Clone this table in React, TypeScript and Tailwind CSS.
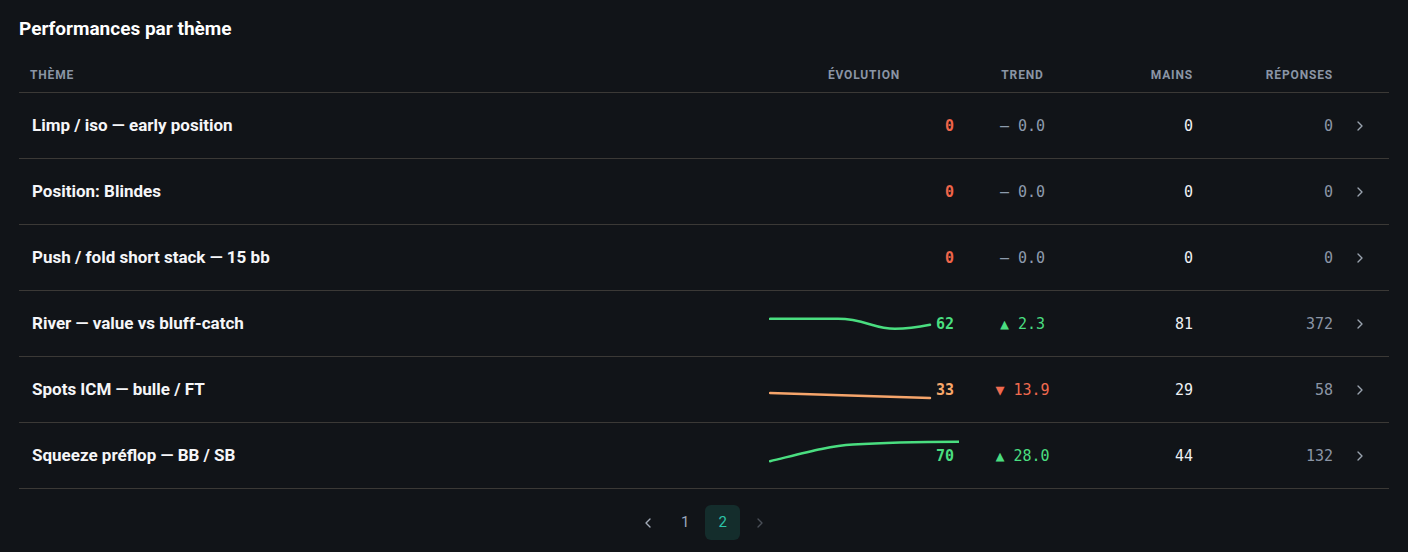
import { ChevronLeft, ChevronRight } from 'lucide-react';

type Row = {
  name: string;
  score: number;
  tone: 'red' | 'green' | 'orange';
  spark?: { d: string; color: string };
  trend: { dir: 'flat' | 'up' | 'down'; value: string };
  hands: number;
  answers: number;
};

const rows: Row[] = [
  { name: 'Limp / iso — early position', score: 0, tone: 'red', trend: { dir: 'flat', value: '0.0' }, hands: 0, answers: 0 },
  { name: 'Position: Blindes', score: 0, tone: 'red', trend: { dir: 'flat', value: '0.0' }, hands: 0, answers: 0 },
  { name: 'Push / fold short stack — 15 bb', score: 0, tone: 'red', trend: { dir: 'flat', value: '0.0' }, hands: 0, answers: 0 },
  {
    name: 'River — value vs bluff-catch',
    score: 62,
    tone: 'green',
    spark: { d: 'M1 12.8 L69 12.8 C95 12.8 105 22.8 126 22.8 C140 22.8 150 21 161 18.8', color: '#4ade80' },
    trend: { dir: 'up', value: '2.3' },
    hands: 81,
    answers: 372,
  },
  {
    name: 'Spots ICM — bulle / FT',
    score: 33,
    tone: 'orange',
    spark: { d: 'M1 21 L161 26', color: '#f6a56b' },
    trend: { dir: 'down', value: '13.9' },
    hands: 29,
    answers: 58,
  },
  {
    name: 'Squeeze préflop — BB / SB',
    score: 70,
    tone: 'green',
    spark: { d: 'M1 23.2 C35 15 60 8 84 6.6 C110 5 150 4 190 3.8', color: '#4ade80' },
    trend: { dir: 'up', value: '28.0' },
    hands: 44,
    answers: 132,
  },
];

const scoreColor = {
  red: 'text-[#f0654a]',
  green: 'text-[#4ade80]',
  orange: 'text-[#f9a86b]',
};

const mono = "font-['DejaVu_Sans_Mono',monospace]";

function Trend({ dir, value }: Row['trend']) {
  if (dir === 'flat') {
    return <span className="text-[#8d9bad]">— {value}</span>;
  }
  if (dir === 'up') {
    return <span className="text-[#4ade80]">▲ {value}</span>;
  }
  return <span className="text-[#ef6a4f]">▼ {value}</span>;
}

const grid = 'grid grid-cols-[1fr_210px_107px_132px_140px_41px] items-center';

export default function App() {
  return (
    <div className="min-h-[552px] bg-[#111418] px-[19px] pt-[15px] font-['Roboto',sans-serif]">
      <h2 className="h-7 text-[19px] font-bold leading-7 text-white">Performances par thème</h2>

      <div className={`${grid} mt-[13px] h-[37px] border-b border-[#3b3936] text-[12px] font-bold uppercase tracking-[0.07em] text-[#8a95a5]`}>
        <div className="pl-[11px] pt-[1px]">Thème</div>
        <div className="pt-[1px] text-center">Évolution</div>
        <div className="pt-[1px] text-center">Trend</div>
        <div className="pr-[15px] pt-[1px] text-right">Mains</div>
        <div className="pr-[15px] pt-[1px] text-right">Réponses</div>
        <div />
      </div>

      {rows.map((row) => (
        <div key={row.name} className={`${grid} h-[66px] border-b border-[#3b3936] pt-[1px]`}>
          <div className="pl-[13px] text-[17px] font-bold text-[#f5f6f8]">{row.name}</div>
          <div className="flex justify-center">
            <div className="relative h-[36px] w-[190px]">
              {row.spark && (
                <svg width="190" height="36" viewBox="0 0 190 36" fill="none" className="absolute inset-0">
                  <path d={row.spark.d} stroke={row.spark.color} strokeWidth="2.5" strokeLinecap="round" strokeLinejoin="round" />
                </svg>
              )}
              <span
                className={`absolute right-[5px] top-1/2 -translate-y-1/2 text-[15px] font-bold ${mono} ${scoreColor[row.tone]}`}
              >
                {row.score}
              </span>
            </div>
          </div>
          <div className={`text-center text-[15px] ${mono}`}>
            <Trend {...row.trend} />
          </div>
          <div className={`pr-[15px] text-right text-[15px] text-[#eef0f3] ${mono}`}>{row.hands}</div>
          <div className={`pr-[15px] text-right text-[15px] text-[#8b95a5] ${mono}`}>{row.answers}</div>
          <div className="pl-[4px]">
            <ChevronRight className="h-4 w-4 text-[#9aa3af]" strokeWidth={2} />
          </div>
        </div>
      ))}

      <div className="mt-[16px] flex justify-center gap-[2.5px]">
        <button className="flex h-[35px] w-[35px] items-center justify-center rounded-md text-[#a3acb9]">
          <ChevronLeft className="h-4 w-4" />
        </button>
        <button className="flex h-[35px] w-[35px] items-center justify-center rounded-md text-[15px] text-[#9aa7bd]">1</button>
        <button className="flex h-[35px] w-[35px] items-center justify-center rounded-md bg-[#142d2c] text-[15px] text-[#2cc3a8]">
          2
        </button>
        <button className="flex h-[35px] w-[35px] items-center justify-center rounded-md text-[#4a4f57]">
          <ChevronRight className="h-4 w-4" />
        </button>
      </div>
    </div>
  );
}
